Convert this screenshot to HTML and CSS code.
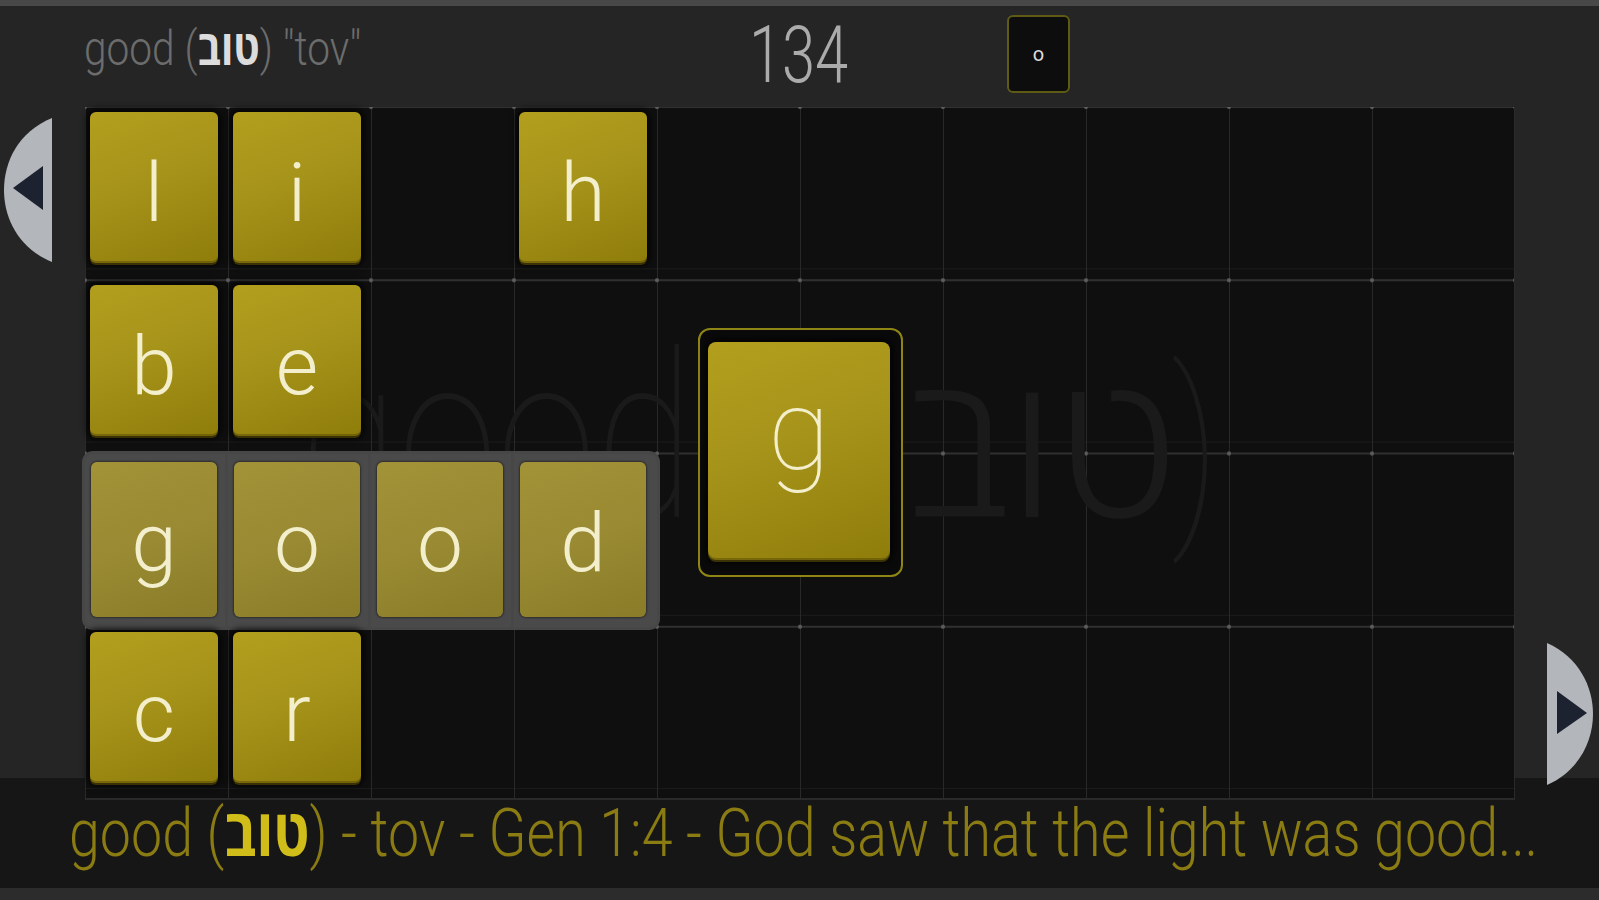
FILE: index.html
```html
<!DOCTYPE html>
<html lang="en">
<head>
<meta charset="utf-8">
<title>Word grid</title>
<link rel="stylesheet" href="styles.css">
</head>
<body>
<div class="app">
  <div class="topstrip"></div>
  <header class="header">
    <div class="title"><span class="sx sx-title">good (<b class="heb">טוב</b>) "tov"</span></div>
    <div class="count"><span class="sx sx-count">134</span></div>
    <div class="obox">o</div>
  </header>
  <main class="main">
    <div class="side side-left">
      <svg class="arrow" width="48" height="144" viewBox="0 0 48 144">
        <path d="M48 0 C14 14 0 44 0 72 C0 100 14 130 48 144 Z" fill="#b3b6ba"/>
        <path d="M9 70 L39 48 L39 92 Z" fill="#1d2231"/>
      </svg>
    </div>
    <div class="board">
      <div class="watermark">
        <span class="wm-latin">good (</span><span class="wm-heb">טוב</span><span class="wm-paren">)</span>
      </div>

      <div class="cell"><div class="tile">l</div></div>
      <div class="cell"><div class="tile">i</div></div>
      <div class="cell"></div>
      <div class="cell"><div class="tile">h</div></div>
      <div class="cell"></div><div class="cell"></div><div class="cell"></div>
      <div class="cell"></div><div class="cell"></div><div class="cell"></div>

      <div class="cell"><div class="tile">b</div></div>
      <div class="cell"><div class="tile">e</div></div>
      <div class="cell"></div><div class="cell"></div><div class="cell"></div>
      <div class="cell"></div><div class="cell"></div><div class="cell"></div>
      <div class="cell"></div><div class="cell"></div>

      <div class="cell hl hl-first"><div class="tile">g</div></div>
      <div class="cell hl"><div class="tile">o</div></div>
      <div class="cell hl"><div class="tile">o</div></div>
      <div class="cell hl hl-last"><div class="tile">d</div></div>
      <div class="cell"></div><div class="cell"></div><div class="cell"></div>
      <div class="cell"></div><div class="cell"></div><div class="cell"></div>

      <div class="cell"><div class="tile">c</div></div>
      <div class="cell"><div class="tile">r</div></div>
      <div class="cell"></div><div class="cell"></div><div class="cell"></div>
      <div class="cell"></div><div class="cell"></div><div class="cell"></div>
      <div class="cell"></div><div class="cell"></div>

      <div class="drag"><div class="tile tile-big">g</div></div>
    </div>
    <div class="side side-right">
      <svg class="arrow" width="46" height="142" viewBox="0 0 46 142">
        <path d="M0 0 C32 14 46 44 46 71 C46 98 32 128 0 142 Z" fill="#b3b6ba"/>
        <path d="M40 70 L10 48 L10 91 Z" fill="#1d2231"/>
      </svg>
    </div>
  </main>
  <footer class="caption"><span class="sx sx-cap">good (<b class="heb heb-cap">טוב</b>) - tov - Gen 1:4 - God saw that the light was good...</span></footer>
  <div class="bottomstrip"></div>
</div>
</body>
</html>
```
FILE: styles.css
```css
html, body {
  margin: 0;
  padding: 0;
}
body {
  background: #252525;
  font-family: Roboto, "Liberation Sans", "Open Sans", "DejaVu Sans", sans-serif;
}
.app {
  width: 1599px;
  height: 900px;
  display: flex;
  flex-direction: column;
  overflow: hidden;
}
.topstrip {
  height: 6px;
  background: #484848;
}
.header {
  height: 101px;
  display: flex;
  align-items: flex-start;
}
.sx {
  display: inline-block;
  transform-origin: 0 50%;
  white-space: nowrap;
}
.sx-title {
  transform: scaleX(0.846);
}
.sx-count {
  transform: scaleX(0.745);
  transform-origin: 50% 50%;
}
.sx-cap {
  transform: scaleX(0.842);
}
.title {
  width: 704px;
  box-sizing: border-box;
  padding-left: 84px;
  margin-top: 17px;
  font-size: 48px;
  line-height: 48px;
  font-weight: 300;
  color: #6c6c6c;
  white-space: nowrap;
}
.heb {
  font-family: "Open Sans", "Liberation Sans", "DejaVu Sans", sans-serif;
  font-weight: 700;
  color: #dcdcdc;
}
.count {
  width: 190px;
  text-align: center;
  margin-top: 9px;
  font-size: 80px;
  line-height: 80px;
  font-weight: 300;
  color: #ababab;
}
.obox {
  margin-left: 113px;
  margin-top: 9px;
  width: 63px;
  height: 78px;
  box-sizing: border-box;
  border: 2px solid #5f5b15;
  border-radius: 6px;
  background: #0d0d0d;
  color: #dddddd;
  font-size: 20px;
  display: flex;
  align-items: center;
  justify-content: center;
}
.main {
  height: 693px;
  display: flex;
  background: linear-gradient(#252525 0, #252525 671px, #161616 671px);
}
.side {
  box-sizing: border-box;
}
.side-left {
  width: 85px;
  padding: 11px 0 0 4px;
}
.side-right {
  width: 84px;
  padding: 536px 0 0 32px;
}
.arrow {
  display: block;
}
.board {
  width: 1430px;
  height: 693px;
  position: relative;
  display: grid;
  grid-template-columns: repeat(10, 143px);
  grid-template-rows: repeat(4, 173.25px);
  background-color: #0f0f0f;
  background-image:
    radial-gradient(circle at 3px 3px, #5c5c5c 0, #5c5c5c 1.5px, rgba(0,0,0,0) 2.5px),
    linear-gradient(90deg, #292929 0, #292929 1px, rgba(0,0,0,0) 1px),
    linear-gradient(#303030 0, #303030 2px, rgba(0,0,0,0) 2px, rgba(0,0,0,0) 162px, #1b1b1b 162px, #1b1b1b 163px, rgba(0,0,0,0) 163px);
  background-size: 143px 173.25px;
  background-position: -3px -3px, 0 0, 0 -1px;
  box-shadow: inset -1px -2px 0 #2a2a2a;
}
.watermark {
  position: absolute;
  left: 215px;
  top: 217px;
  height: 230px;
  display: flex;
  align-items: baseline;
  color: #1a1a1a;
  white-space: nowrap;
  z-index: 0;
}
.wm-latin {
  display: block;
  width: 608px;
  font-size: 230px;
  line-height: 230px;
  font-weight: 100;
  transform: scaleX(0.78);
  transform-origin: 0 0;
}
.wm-heb {
  display: block;
  width: 263px;
  font-family: "Open Sans", "DejaVu Sans", sans-serif;
  font-size: 198px;
  line-height: 230px;
  font-weight: 300;
}
.wm-paren {
  display: block;
  font-size: 205px;
  line-height: 230px;
  font-weight: 100;
  transform: scaleX(0.78);
  transform-origin: 0 0;
}
.cell {
  position: relative;
  z-index: 1;
}
.tile {
  margin: 5px 10px 0 5px;
  height: 151px;
  box-sizing: border-box;
  padding-top: 12px;
  line-height: 139px;
  text-align: center;
  font-size: 82px;
  font-weight: 300;
  color: #f3efcc;
  border-radius: 6px;
  background: linear-gradient(160deg, #b39f1d 0%, #a6931a 45%, #8f7d0b 100%);
  box-shadow: inset 0 -2px 0 rgba(60, 50, 0, 0.35), 0 2px 0 #3a3204, 0 0 6px 3px rgba(0, 0, 0, 0.75);
}
.hl {
  background: #4a4a4a;
  box-shadow: 0 0 0 3px #474747;
}
.hl-first {
  border-radius: 8px 0 0 8px;
}
.hl-last {
  border-radius: 0 8px 8px 0;
}
.hl .tile {
  margin: 8px 11px 0 6px;
  height: 155px;
  background: linear-gradient(160deg, #a29338 0%, #998a33 50%, #8a7c28 100%);
  box-shadow: 0 0 2px 1px rgba(0, 0, 0, 0.4);
}
.drag {
  position: absolute;
  left: 613px;
  top: 221px;
  width: 205px;
  height: 249px;
  box-sizing: border-box;
  border: 2px solid #8e8515;
  border-radius: 12px;
  background: #0a0a0a;
  padding: 12px 11px 15px 8px;
  z-index: 2;
}
.tile-big {
  margin: 0;
  height: 100%;
  padding-top: 0;
  line-height: 176px;
  font-size: 114px;
  font-weight: 100;
  border-radius: 8px;
}
.caption {
  height: 88px;
  box-sizing: border-box;
  background: #161616;
  padding-left: 69px;
  font-size: 66px;
  line-height: 60px;
  font-weight: 300;
  color: #8a7b12;
  white-space: nowrap;
}
.heb-cap {
  color: #d0bd1a;
}
.bottomstrip {
  height: 12px;
  background: #2c2c2c;
}
```
